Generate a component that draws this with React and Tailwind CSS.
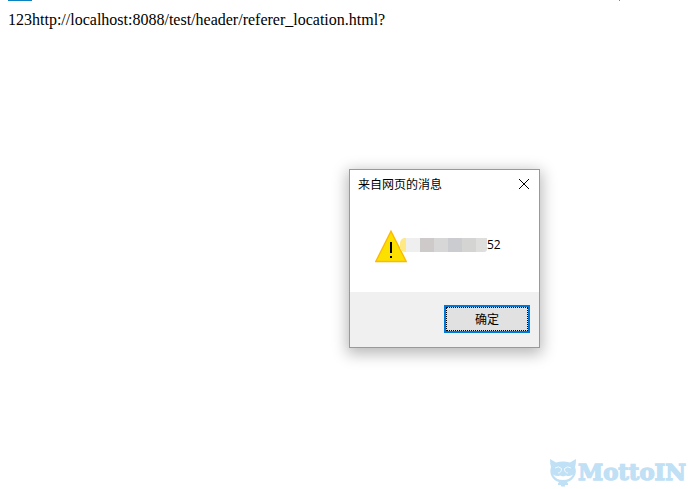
const MASK_BLOCKS = [
  'w-[14px] bg-[#efefef]',
  'w-[14px] bg-[#cfcaca]',
  'w-[14px] bg-[#d7d7d7]',
  'w-[14px] bg-[#cacccf]',
  'w-[14px] bg-[#d4d4d2]',
  'w-[11px] rounded-br-[3px] bg-[#dededc]',
];

function WarningIcon() {
  return (
    <svg className="block h-[33px] w-8" viewBox="0 0 32 33">
      <path d="M16 1.2 31.2 31.500H.8Z" fill="#fce100" stroke="#ffb900" strokeWidth="1.4" />
      <path d="M15 12h2v11h-2zM15 26h2v2h-2z" fill="#000" />
    </svg>
  );
}

function Dialog() {
  return (
    <div className="flex h-[179px] w-[191px] flex-col border border-[#999] bg-white font-['Noto_Sans_CJK_SC','Open_Sans',sans-serif] text-xs text-black shadow-[0_4px_14px_2px_rgba(0,0,0,0.28)]">
      <div className="flex h-[27px] items-center justify-between pl-2 pr-[9px]">
        <span className="leading-[27px]">来自网页的消息</span>
        <svg className="h-3 w-3" viewBox="0 0 12 12" fill="none" stroke="#000" strokeWidth="1">
          <path d="m1 1 10 10M11 1 1 11" />
        </svg>
      </div>
      <div className="flex flex-1 items-start pl-[25px] pt-[33px]">
        <WarningIcon />
        <div className="-ml-[7px] mt-2 flex h-[14px] items-stretch">
          <span className="w-[6px] rounded-l-[5px] bg-[#fee984]" />
          {MASK_BLOCKS.map((block) => (
            <span key={block} className={block} />
          ))}
          <span className="font-['Open_Sans',sans-serif] leading-[14px]">52</span>
        </div>
      </div>
      <div className="flex h-[55px] items-start justify-end bg-[#f0f0f0] pr-[9px] pt-[13px]">
        <button className="flex h-7 w-[86px] items-stretch border-2 border-[#0078d7] bg-[#e1e1e1]">
          <span className="flex-1 border border-dotted border-black leading-[21px]">确定</span>
        </button>
      </div>
    </div>
  );
}

function Watermark() {
  return (
    <svg className="block h-7 w-[138px]" viewBox="0 0 138 28" fill="#bfe0f5">
      <path d="M0 0 6 3.500Q13 1.500 20 3.500L26 0Q26 5 25 8Q27 13 24.500 17Q22 22 17 23L18 24.500V26H15V27.500H11V26H8V24.500L9 23Q4 22 1.500 17Q-.5 13 1 8Q0 5 0 0Z" />
      <g fill="none" stroke="#fff" strokeWidth="0.8">
        <path d="M5 9Q8.500 6.500 11.500 9.500Q11.500 14 8 14M21 9Q17.500 6.500 14.500 9.500Q14.500 14 18 14" />
      </g>
      <path d="M3 15.500Q7 18 10 16.500L13 17.500 16 16.500Q19 18 23 15.500Q20 21 13 21Q6 21 3 15.500Z" fill="#fff" />
      <text
        x="28"
        y="21"
        textLength="108"
        lengthAdjust="spacingAndGlyphs"
        className="font-['DejaVu_Serif',serif] text-[23px] font-bold"
        stroke="#bfe0f5"
        strokeWidth="1.3"
      >
        MottoIN
      </text>
    </svg>
  );
}

export default function App() {
  return (
    <main className="flex h-[489px] w-[693px] flex-col overflow-hidden bg-white">
      <div className="flex h-[10px] items-start justify-between pl-2 pr-[73px]">
        <span className="h-px w-6 bg-[#0a84c1]" />
        <span className="h-px w-px bg-[#888]" />
      </div>
      <p className="pl-2 font-['Liberation_Serif',serif] text-base leading-[19px] text-black">
        123http://localhost:8088/test/header/referer_location.html?
      </p>
      <div className="mt-[140px] pl-[349px]">
        <Dialog />
      </div>
      <div className="mt-[111px] pl-[550px]">
        <Watermark />
      </div>
    </main>
  );
}
